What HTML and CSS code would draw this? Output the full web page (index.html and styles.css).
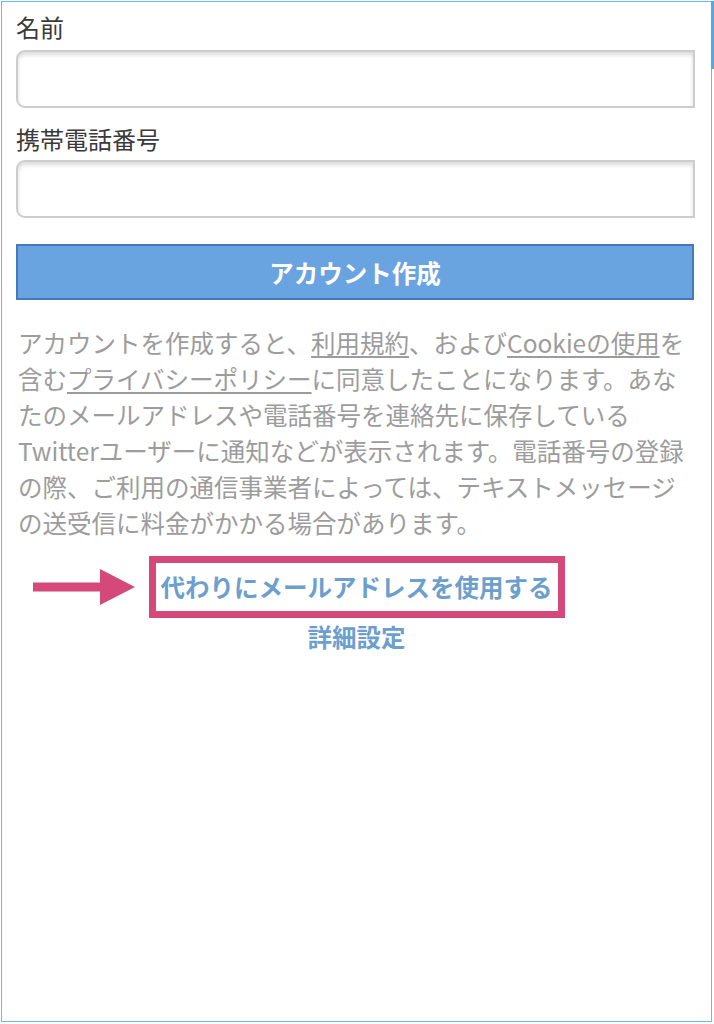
FILE: index.html
```html
<!DOCTYPE html>
<html lang="ja">
<head>
<meta charset="utf-8">
<link rel="stylesheet" href="styles.css">
</head>
<body>
<div class="frame">
  <div class="scrollbar"></div>
  <div class="content">
    <label class="label">名前</label>
    <div class="input"></div>
    <label class="label label-2">携帯電話番号</label>
    <div class="input"></div>
    <div class="button">アカウント作成</div>
    <p class="terms">アカウントを作成すると、<span class="u">利用規約</span>、および<span class="u">Cookieの使用</span>を含む<span class="u">プライバシーポリシー</span>に同意したことになります。あなたのメールアドレスや電話番号を連絡先に保存しているTwitterユーザーに通知などが表示されます。電話番号の登録の際、ご利用の通信事業者によっては、テキストメッセージの送受信に料金がかかる場合があります。</p>
    <div class="email-row">
      <div class="highlight">
        <svg class="arrow" width="102" height="36" viewBox="0 0 102 36">
          <rect x="0" y="13.5" width="70" height="9" fill="#d5497a"/>
          <polygon points="67,0 102,18 67,36" fill="#d5497a"/>
        </svg>
        <span class="link">代わりにメールアドレスを使用する</span>
      </div>
    </div>
    <div class="advanced"><span class="link">詳細設定</span></div>
  </div>
</div>
</body>
</html>
```

FILE: styles.css
```css
html, body {
  margin: 0;
  padding: 0;
  background: #ffffff;
}

body {
  font-family: "Noto Sans CJK JP", "Noto Sans", sans-serif;
}

.frame {
  position: relative;
  margin: 1px 0 0 1px;
  width: 711px;
  height: 1021px;
  box-sizing: border-box;
  border: 1px solid #62bdf2;
  background: #ffffff;
}

.scrollbar {
  position: absolute;
  top: -1px;
  right: -3px;
  width: 3px;
  height: 68px;
  background: #4fa9ea;
}

.content {
  padding: 8px 16px 0 14px;
  display: flex;
  flex-direction: column;
}

.label {
  display: block;
  font-size: 24px;
  line-height: 34px;
  color: #3a3a3a;
}

.label-2 {
  margin-top: 14px;
}

.input {
  margin-top: 6px;
  height: 58px;
  box-sizing: border-box;
  border: 2px solid #cdcdcd;
  border-radius: 9px 0 0 9px;
  box-shadow: inset 0 3px 4px rgba(0, 0, 0, 0.14);
  background: #ffffff;
}

.label-2 + .input {
  margin-top: 4px;
}

.button {
  margin-top: 26px;
  height: 56px;
  box-sizing: border-box;
  border: 2px solid #4479bb;
  background: #69a4e0;
  color: #ffffff;
  font-size: 24.5px;
  font-weight: 700;
  display: flex;
  align-items: center;
  justify-content: center;
  margin-right: 1px;
}

.terms {
  margin: 25px 0 0 2px;
  font-size: 24.5px;
  line-height: 36px;
  color: #9c9c9c;
}

.u {
  text-decoration: underline;
  text-underline-offset: 3px;
}

.email-row {
  margin-top: 15px;
  display: flex;
  justify-content: center;
  padding-left: 2px;
}

.highlight {
  position: relative;
  border: 7px solid #d5497a;
  padding: 0 5px;
  height: 62px;
  box-sizing: border-box;
  display: flex;
  align-items: center;
}

.arrow {
  position: absolute;
  left: -123px;
  top: 6px;
}

.link {
  font-size: 24.5px;
  font-weight: 700;
  color: #6c9fcd;
  line-height: 30px;
}

.advanced {
  margin-top: 4px;
  display: flex;
  justify-content: center;
  padding-left: 2px;
}
```
